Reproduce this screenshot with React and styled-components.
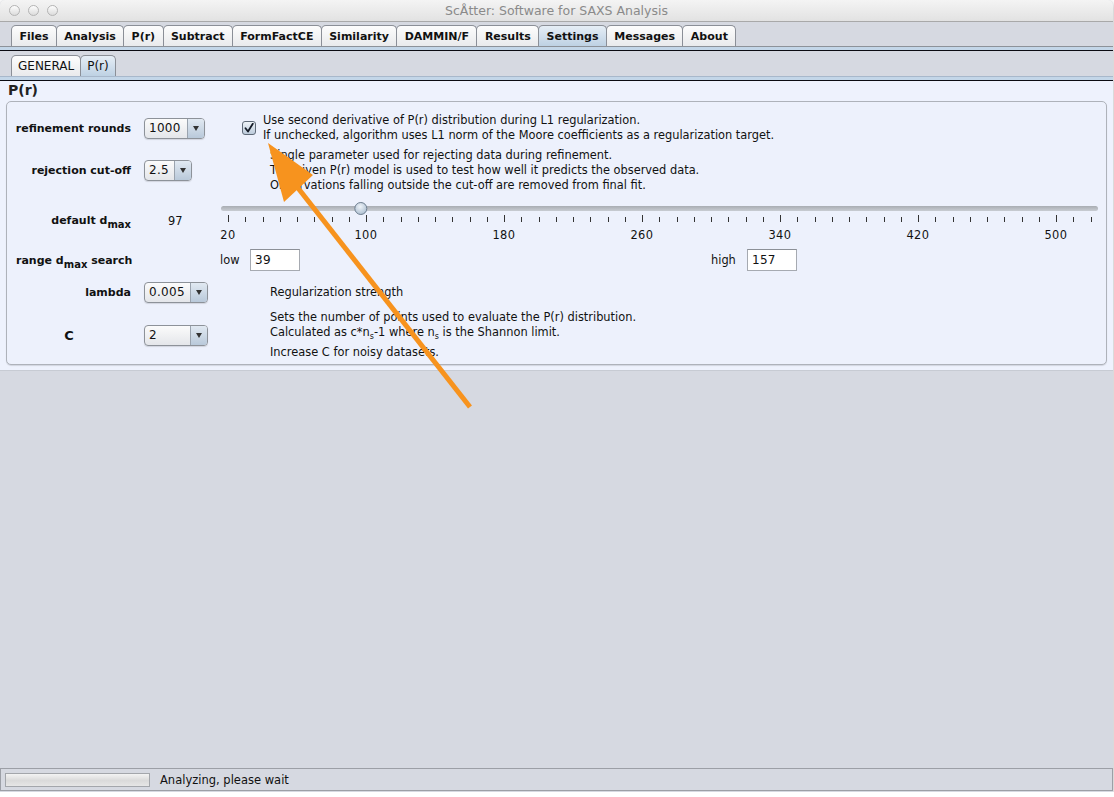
import React, { useState } from 'react'
import styled, { createGlobalStyle } from 'styled-components'

const GlobalStyle = createGlobalStyle`
  html, body {
    margin: 0;
    padding: 0;
    background: #ffffff;
  }
  body {
    font-family: "DejaVu Sans", "Liberation Sans", sans-serif;
    font-size: 11px;
    color: #111;
  }
`

const Window = styled.div`
  position: relative;
  width: 1113px;
  height: 792px;
  display: flex;
  flex-direction: column;
  background: #d6d9e1;
  border-radius: 5px 5px 0 0;
  box-shadow: 0 2px 5px rgba(0, 0, 0, 0.35);
  overflow: hidden;
`

const TitleBar = styled.div`
  height: 22px;
  flex: none;
  display: flex;
  align-items: center;
  position: relative;
  background: linear-gradient(#f4f4f4, #e2e2e2);
  border-bottom: 1px solid #a9a9a9;
  box-sizing: border-box;
`

const Lights = styled.div`
  display: flex;
  gap: 8px;
  padding-left: 9px;
`

const Light = styled.span`
  width: 11px;
  height: 11px;
  border-radius: 50%;
  border: 1px solid #b3b3b3;
  background: linear-gradient(#fdfdfd, #dcdcdc);
  box-sizing: border-box;
`

const Title = styled.div`
  position: absolute;
  left: 0;
  right: 0;
  text-align: center;
  font-family: "DejaVu Sans", sans-serif;
  font-size: 12.5px;
  color: #8a8a8a;
  pointer-events: none;
`

const TabRow = styled.div`
  flex: none;
  display: flex;
  align-items: flex-end;
  height: ${p => p.$h}px;
  padding-left: 11px;
  box-sizing: border-box;
  background: #d6d9e1;
`

const Tab = styled.div`
  height: ${p => p.$h}px;
  padding: 0 ${p => p.$pad}px;
  display: flex;
  align-items: center;
  box-sizing: border-box;
  border: 1px solid #8b8f97;
  border-bottom: none;
  margin-right: -1px;
  border-radius: 5px 5px 0 0;
  font-weight: ${p => (p.$bold ? 700 : 400)};
  font-size: ${p => p.$fs}px;
  color: #111;
  background: ${p =>
    p.$active
      ? 'linear-gradient(#e6eef6, #bed1e3)'
      : 'linear-gradient(#fdfdfd, #e9eaec)'};
`

const TabRule = styled.div`
  flex: none;
  height: 5px;
  box-sizing: border-box;
  border-top: 1px solid ${p => p.$top};
  border-bottom: 1px solid #0b0b12;
  background: #c3d6e8;
`

const Content = styled.div`
  flex: none;
  background: #eef2fd;
  padding: 1px 6px 5px 6px;
  border-bottom: 1px solid #c7cbd3;
`

const SectionTitle = styled.div`
  font-weight: 700;
  font-size: 14px;
  height: 19px;
  line-height: 17px;
  padding-left: 2px;
  color: #222;
`

const Group = styled.div`
  border: 1px solid #aeb2ba;
  border-radius: 5px;
  box-shadow: 0 1px 1px rgba(0, 0, 0, 0.12);
  background: #edf1fc;
  padding: 11px 0 2px 0;
`

const Row = styled.div`
  display: grid;
  grid-template-columns: 124px 89px 1fr;
  height: ${p => p.$h}px;
  align-items: center;
`

const Label = styled.div`
  font-weight: 700;
  font-size: ${p => p.$fs || 11}px;
  color: #111;
  text-align: ${p => p.$align || 'right'};
  padding-left: ${p => p.$pl || 0}px;
  white-space: nowrap;
  sub {
    font-size: 10px;
    vertical-align: -4px;
    line-height: 0;
  }
`

const ControlCell = styled.div`
  padding-left: 13px;
  display: flex;
  align-items: center;
`

const Value = styled.span`
  padding-left: 24px;
  font-size: 11.4px;
`

const Combo = styled.div`
  width: ${p => p.$w}px;
  height: 21px;
  box-sizing: border-box;
  display: flex;
  border: 1px solid #8d9299;
  border-radius: 4px;
  background: linear-gradient(#fbfbfb, #e4e6ea);
  box-shadow: 0 1px 1px rgba(0, 0, 0, 0.12);
  overflow: hidden;
`

const ComboText = styled.span`
  flex: 1;
  padding-left: 4px;
  line-height: 19px;
  font-size: 12px;
  letter-spacing: 0.3px;
`

const ComboArrow = styled.span`
  width: 16px;
  border-left: 1px solid #9aa3ae;
  background: linear-gradient(#e1e9f2, #b9c9da);
  display: flex;
  align-items: center;
  justify-content: center;
  &::after {
    content: '';
    border-left: 3.5px solid transparent;
    border-right: 3.5px solid transparent;
    border-top: 5px solid #333;
  }
`

const Desc = styled.div`
  padding-left: ${p => p.$pl}px;
  display: flex;
  flex-direction: column;
  gap: ${p => p.$gap || 0}px;
  line-height: 15px;
  font-size: 11.4px;
  color: #111;
  white-space: nowrap;
  sub {
    font-size: 8px;
    vertical-align: -3px;
    line-height: 0;
  }
`

const CheckRow = styled.div`
  display: flex;
  align-items: center;
  gap: 7px;
  padding-left: 22px;
`

const CheckBox = styled.span`
  width: 14px;
  height: 14px;
  flex: none;
  box-sizing: border-box;
  border: 1px solid #5f6a78;
  border-radius: 3px;
  background: linear-gradient(#eef3f8, #bccbdb);
  display: flex;
  align-items: center;
  justify-content: center;
`

const SliderWrap = styled.div`
  position: relative;
  height: 47px;
  margin-right: 10px;
`

const SliderSvg = styled.svg`
  position: absolute;
  left: 0;
  top: 0;
`

const TickLabel = styled.span`
  position: absolute;
  top: 31px;
  transform: translateX(-50%);
  font-size: 11.4px;
  letter-spacing: 0.5px;
`

const RangeCell = styled.div`
  display: grid;
  grid-template-columns: 30px 50px 411px 36px 50px;
  align-items: center;
  font-size: 11.4px;
`

const TextField = styled.div`
  width: 50px;
  height: 22px;
  box-sizing: border-box;
  border: 1px solid #a6aab1;
  border-top-color: #8c9097;
  background: #fff;
  padding-left: 4px;
  line-height: 20px;
  font-size: 12px;
  letter-spacing: 0.3px;
`

const Filler = styled.div`
  flex: 1;
`

const StatusBar = styled.div`
  flex: none;
  height: 23px;
  box-sizing: border-box;
  border: 1px solid #9c9fa6;
  display: flex;
  align-items: center;
  gap: 10px;
  padding-left: 4px;
  background: #d6d9e1;
  margin-bottom: 1px;
`

const Progress = styled.div`
  width: 145px;
  height: 14px;
  box-sizing: border-box;
  border: 1px solid #a3a6ab;
  background: linear-gradient(#f3f3f3, #dadada 55%, #e6e6e6);
`

const StatusText = styled.span`
  font-size: 11.5px;
`

const ArrowSvg = styled.svg`
  position: absolute;
  left: 0;
  top: 0;
  pointer-events: none;
`

const mainTabs = ['Files', 'Analysis', 'P(r)', 'Subtract', 'FormFactCE', 'Similarity', 'DAMMIN/F', 'Results', 'Settings', 'Messages', 'About']
const subTabs = ['GENERAL', 'P(r)']

// slider scale: 20 at x=8 inside the slider, 1.725px per unit
const scaleX = v => 8 + (v - 20) * 1.725
const ticks = []
for (let v = 20; v <= 520; v += 10) ticks.push(v)
const majors = [20, 100, 180, 260, 340, 420, 500]

const ComboBox = ({ value, width }) => (
  <Combo $w={width}>
    <ComboText>{value}</ComboText>
    <ComboArrow />
  </Combo>
)

const DmaxSlider = ({ value }) => (
  <SliderWrap>
    <SliderSvg width="880" height="30">
      <defs>
        <linearGradient id="track" x1="0" y1="0" x2="0" y2="1">
          <stop offset="0" stopColor="#a9adb3" />
          <stop offset="1" stopColor="#c8ccd2" />
        </linearGradient>
        <radialGradient id="knob" cx="0.45" cy="0.35" r="0.7">
          <stop offset="0" stopColor="#eef3f8" />
          <stop offset="1" stopColor="#a9bccf" />
        </radialGradient>
      </defs>
      <rect x="1" y="9" width="877" height="5" rx="2.5" fill="url(#track)" />
      {ticks.map(v => {
        const major = majors.includes(v)
        const x = Math.round(scaleX(v)) + 0.5
        return <line key={v} x1={x} x2={x} y1={major ? 18 : 20} y2={25} stroke="#333" strokeWidth="1" />
      })}
      <circle cx={scaleX(value)} cy="11.5" r="6" fill="url(#knob)" stroke="#6e7e8f" strokeWidth="1" />
    </SliderSvg>
    {majors.map(v => (
      <TickLabel key={v} style={{ left: scaleX(v) }}>{v}</TickLabel>
    ))}
  </SliderWrap>
)

const App = () => {
  const [mainTab] = useState('Settings')
  const [subTab] = useState('P(r)')

  return (
    <>
      <GlobalStyle />
      <Window>
        <TitleBar>
          <Lights>
            <Light />
            <Light />
            <Light />
          </Lights>
          <Title>ScÅtter: Software for SAXS Analysis</Title>
        </TitleBar>

        <TabRow $h={24}>
          {mainTabs.map(t => (
            <Tab key={t} $h={21} $pad={7.4} $fs={11} $bold $active={t === mainTab}>{t}</Tab>
          ))}
        </TabRow>
        <TabRule $top="#8d9299" />

        <TabRow $h={25}>
          {subTabs.map(t => (
            <Tab key={t} $h={21} $pad={6} $fs={12} $active={t === subTab}>{t}</Tab>
          ))}
        </TabRow>
        <TabRule $top="#a8b8cb" />

        <Content>
          <SectionTitle>P(r)</SectionTitle>
          <Group>
            <Row $h={30}>
              <Label>refinement rounds</Label>
              <ControlCell><ComboBox value="1000" width={61} /></ControlCell>
              <CheckRow>
                <CheckBox>
                  <svg width="10" height="10" viewBox="0 0 10 10">
                    <path d="M1.5 5.2 L4 8.5 L8.8 0.8" fill="none" stroke="#151c28" strokeWidth="1.8" strokeLinecap="round" strokeLinejoin="round" />
                  </svg>
                </CheckBox>
                <Desc $pl={0}>
                  <span>Use second derivative of P(r) distribution during L1 regularization.</span>
                  <span>If unchecked, algorithm uses L1 norm of the Moore coefficients as a regularization target.</span>
                </Desc>
              </CheckRow>
            </Row>

            <Row $h={54}>
              <Label>rejection cut-off</Label>
              <ControlCell><ComboBox value="2.5" width={48} /></ControlCell>
              <Desc $pl={50}>
                <span>Single parameter used for rejecting data during refinement.</span>
                <span>The given P(r) model is used to test how well it predicts the observed data.</span>
                <span>Observations falling outside the cut-off are removed from final fit.</span>
              </Desc>
            </Row>

            <Row $h={47}>
              <Label>default d<sub>max</sub></Label>
              <ControlCell><Value>97</Value></ControlCell>
              <DmaxSlider value={97} />
            </Row>

            <Row $h={32}>
              <Label $align="left" $pl={9}>range d<sub>max</sub> search</Label>
              <div />
              <RangeCell>
                <span>low</span>
                <TextField>39</TextField>
                <span />
                <span>high</span>
                <TextField>157</TextField>
              </RangeCell>
            </Row>

            <Row $h={32}>
              <Label>lambda</Label>
              <ControlCell><ComboBox value="0.005" width={64} /></ControlCell>
              <Desc $pl={50}>
                <span>Regularization strength</span>
              </Desc>
            </Row>

            <Row $h={54}>
              <Label $align="center" $fs={13}>C</Label>
              <ControlCell><ComboBox value="2" width={64} /></ControlCell>
              <Desc $pl={50} $gap={5}>
                <div>
                  <div>Sets the number of points used to evaluate the P(r) distribution.</div>
                  <div>Calculated as c*n<sub>s</sub>-1 where n<sub>s</sub> is the Shannon limit.</div>
                </div>
                <span>Increase C for noisy datasets.</span>
              </Desc>
            </Row>
          </Group>
        </Content>

        <Filler />

        <StatusBar>
          <Progress />
          <StatusText>Analyzing, please wait</StatusText>
        </StatusBar>

        <ArrowSvg width="1113" height="792">
          <line x1="470" y1="407" x2="298" y2="188" stroke="#f7931e" strokeWidth="5" />
          <polygon points="268,143 284,202 313,175" fill="#f7931e" />
        </ArrowSvg>
      </Window>
    </>
  )
}

export default App
